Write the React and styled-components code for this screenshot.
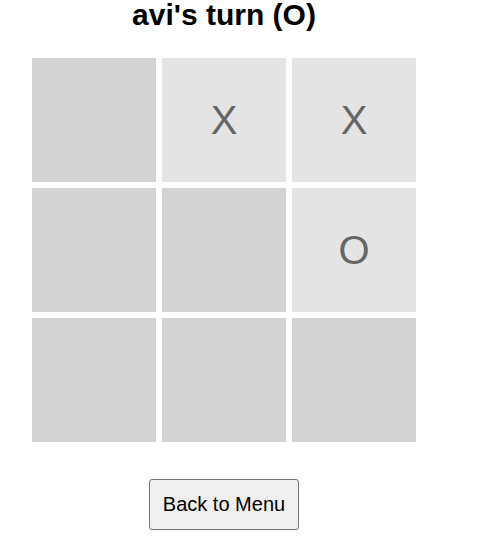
import React, { useState } from 'react';
import styled, { createGlobalStyle } from 'styled-components';

const GlobalStyle = createGlobalStyle`
  body {
    margin: 0;
    background: #fff;
    font-family: "Liberation Sans", Arial, sans-serif;
  }
`;

const Page = styled.div`
  width: 448px;
  display: flex;
  flex-direction: column;
  align-items: center;
`;

const Title = styled.h1`
  margin: 0;
  font-size: 30px;
  line-height: 30px;
  font-weight: bold;
  color: #000;
`;

const Board = styled.div`
  margin-top: 28px;
  display: grid;
  grid-template-columns: repeat(3, 124px);
  grid-auto-rows: 124px;
  gap: 6px;
`;

const Cell = styled.button`
  border: none;
  padding: 0;
  margin: 0;
  font-family: "Liberation Sans", Arial, sans-serif;
  font-size: 40px;
  color: #666;
  background: ${(p) => (p.$filled ? '#e4e4e4' : '#d3d3d3')};
  display: flex;
  align-items: center;
  justify-content: center;
  cursor: ${(p) => (p.$filled ? 'default' : 'pointer')};
`;

const MenuButton = styled.button`
  margin-top: 37px;
  padding: 13px 13px;
  font-family: "Liberation Sans", Arial, sans-serif;
  font-size: 20px;
  line-height: 23px;
  color: #000;
  background: #efefef;
  border: 1px solid #767676;
  border-radius: 3px;
  cursor: pointer;
`;

const App = () => {
  const [board] = useState(['', 'X', 'X', '', '', 'O', '', '', '']);

  return (
    <Page>
      <GlobalStyle />
      <Title>avi's turn (O)</Title>
      <Board>
        {board.map((v, i) => (
          <Cell key={i} $filled={!!v}>
            {v}
          </Cell>
        ))}
      </Board>
      <MenuButton>Back to Menu</MenuButton>
    </Page>
  );
};

export default App;
